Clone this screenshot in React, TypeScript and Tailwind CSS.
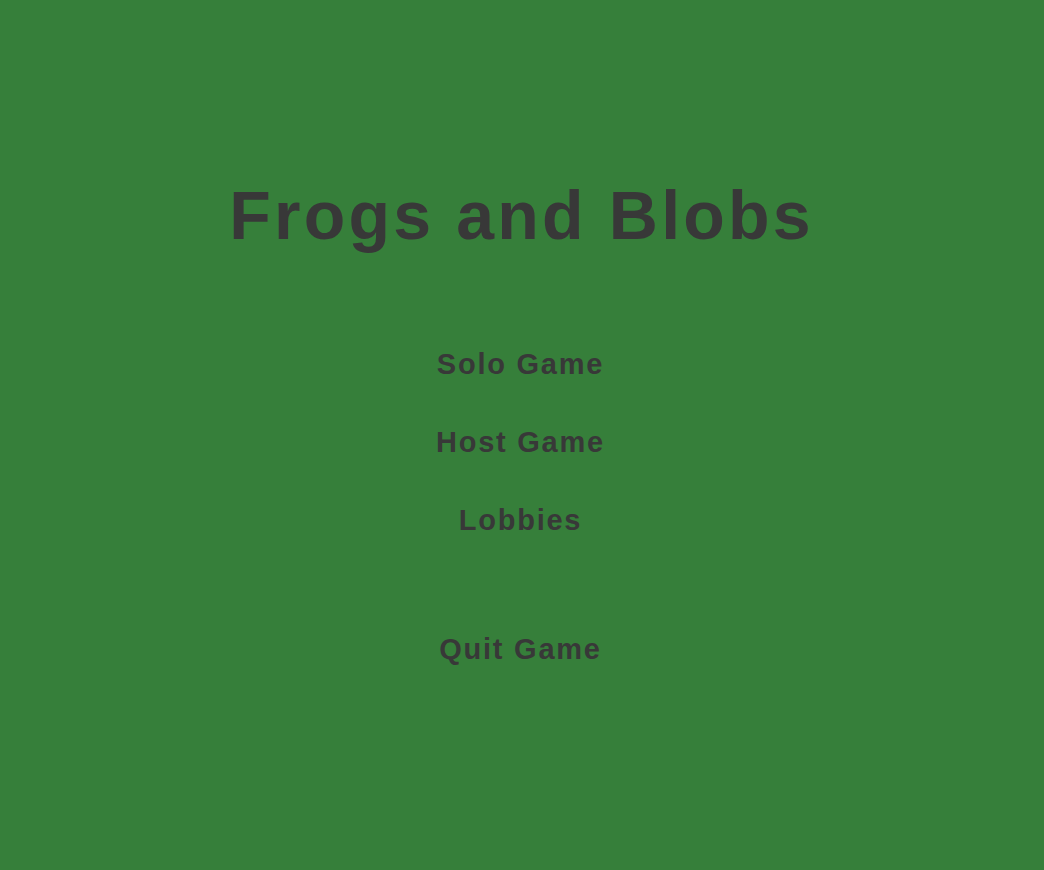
export default function App() {
  const font = { fontFamily: '"Liberation Sans", Arial, sans-serif' };
  const item = "text-[29px] leading-none h-[29px] font-bold tracking-[1.75px]";
  return (
    <div
      className="min-h-screen w-full bg-[#367f3a] flex flex-col items-center text-[#383838]"
      style={font}
    >
      <h1 className="mt-[181px] text-[68px] leading-none font-bold tracking-[3.2px] mr-[1px]">
        Frogs and Blobs
      </h1>
      <div className="mt-[101px] mr-[3px] flex flex-col items-center gap-[48.8px]">
        <button className={item}>Solo Game</button>
        <button className={item}>Host Game</button>
        <button className={item}>Lobbies</button>
        <button className={"mt-[51.2px] " + item}>Quit Game</button>
      </div>
    </div>
  );
}
